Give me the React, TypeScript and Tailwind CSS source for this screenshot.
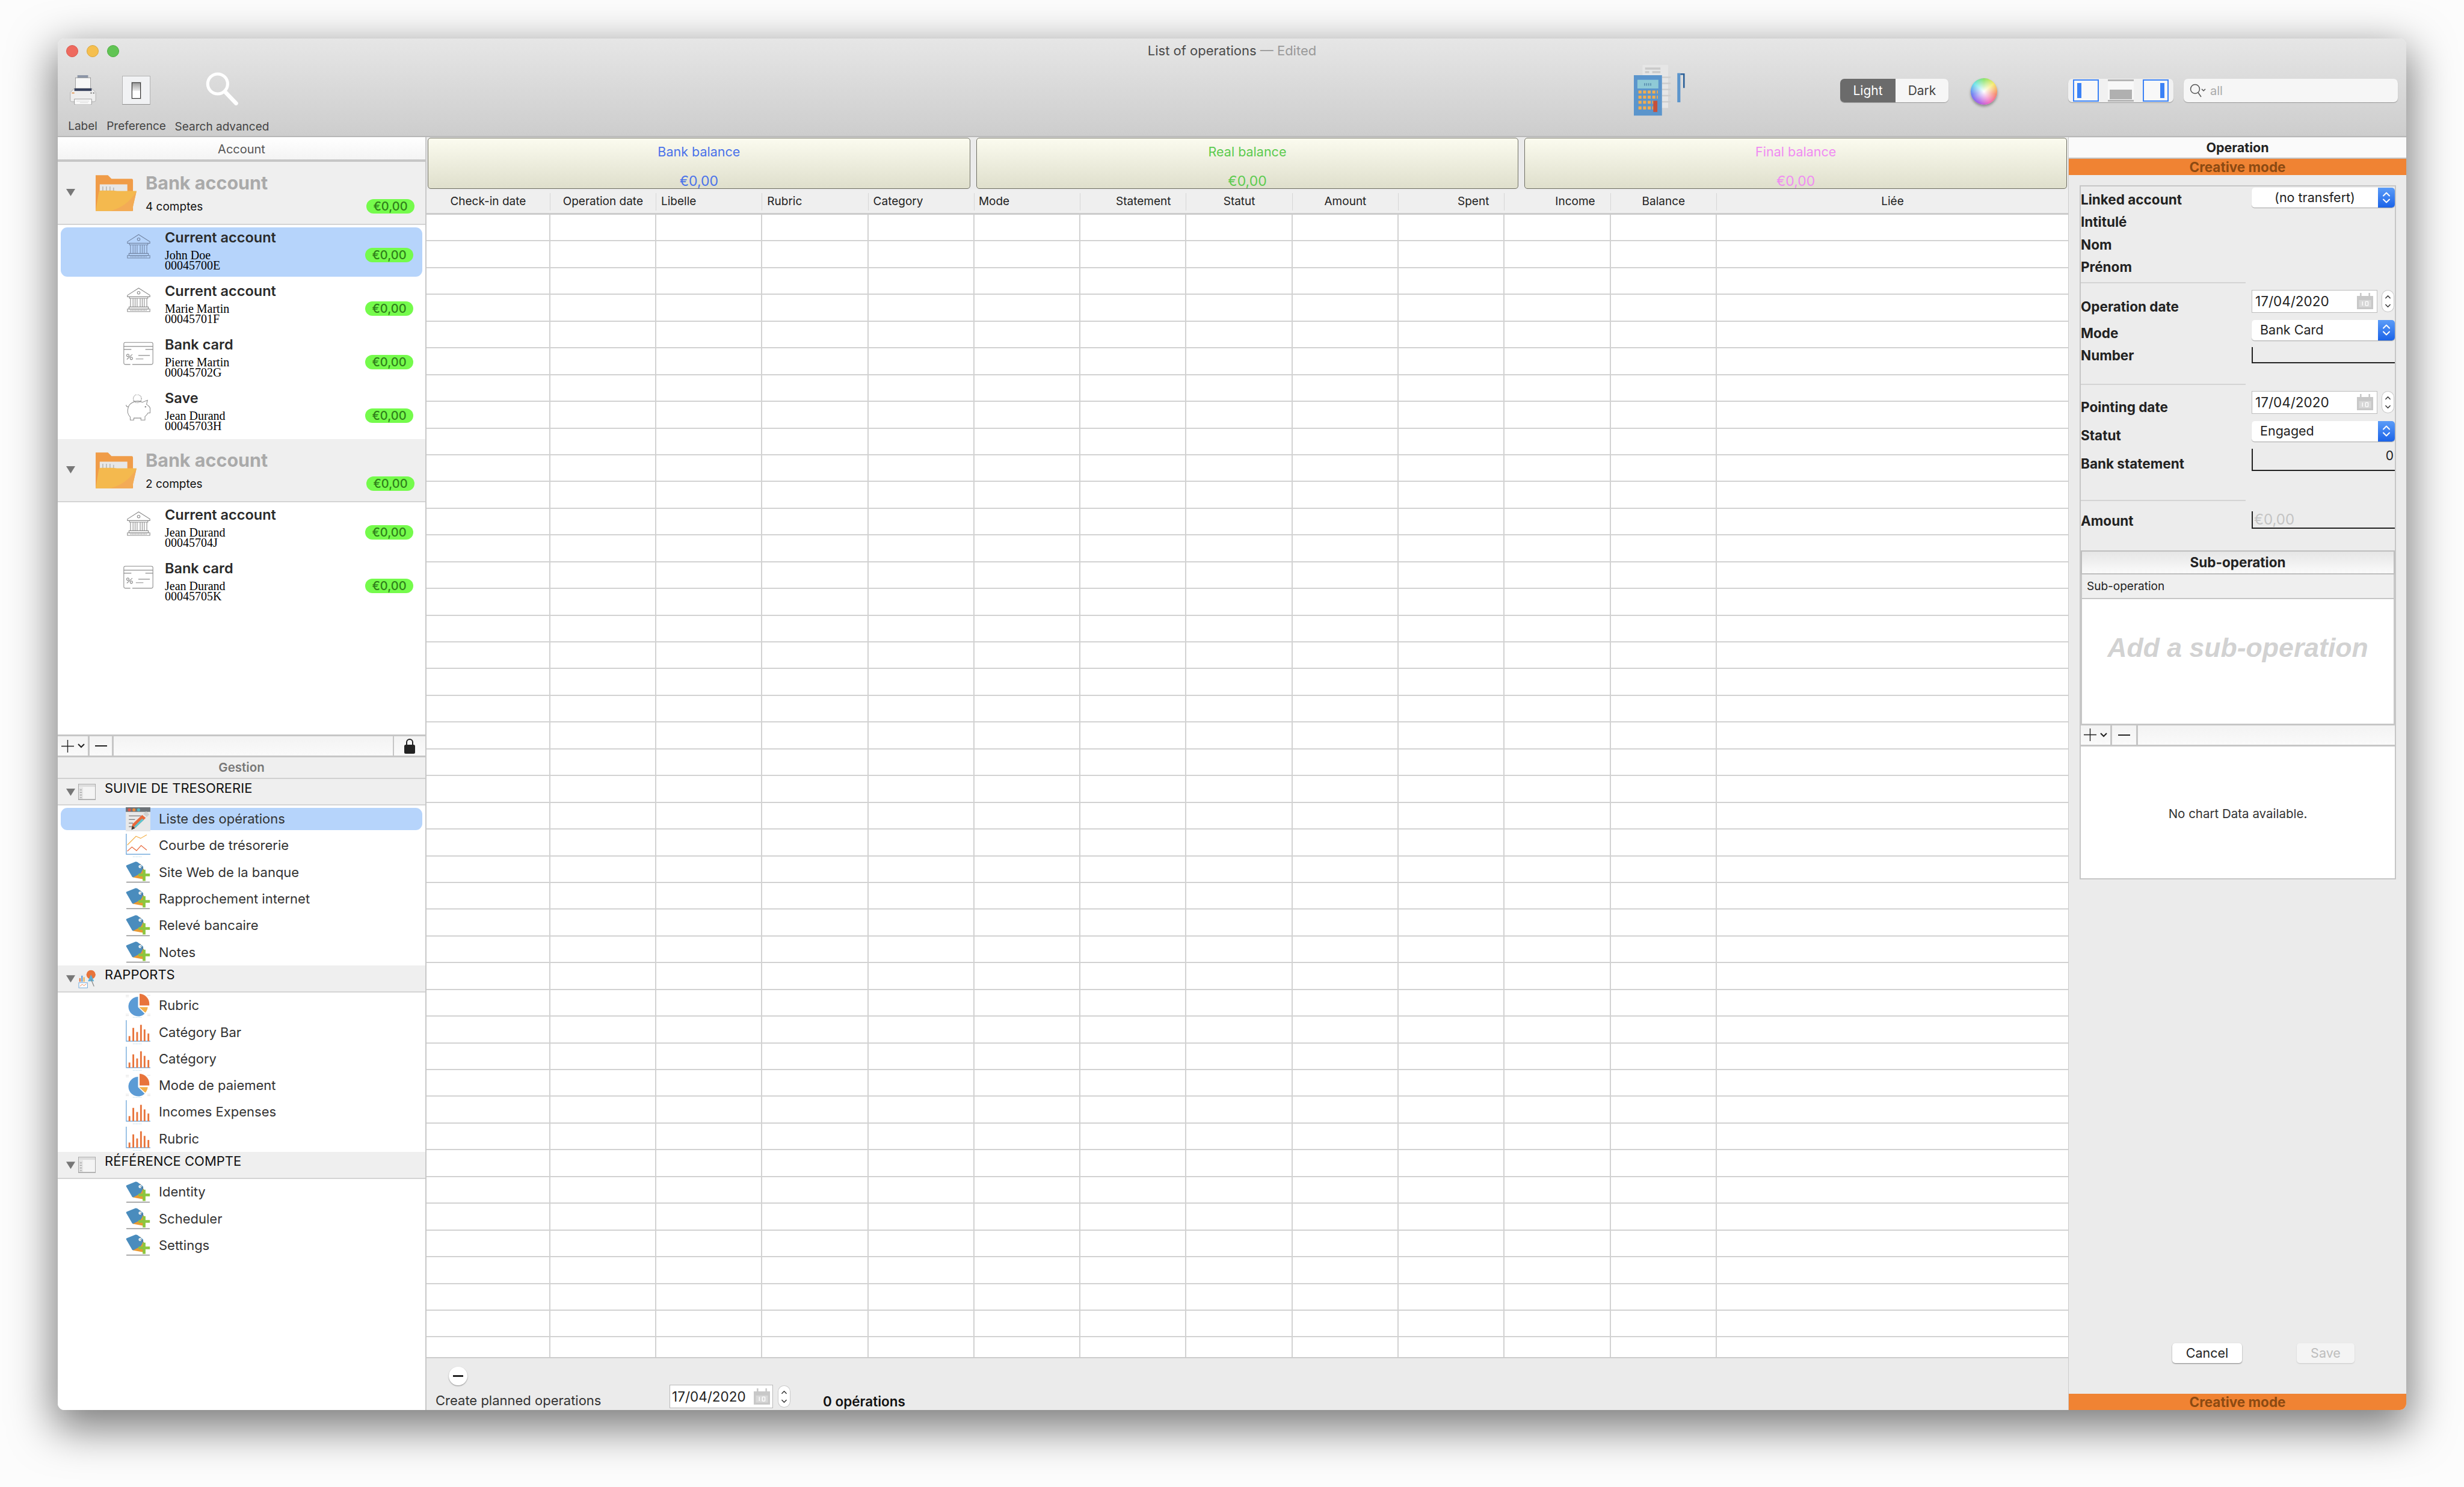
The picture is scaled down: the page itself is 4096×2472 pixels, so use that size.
import React from 'react';

const BankIcon = ({ stroke = '#8c8c8c' }: { stroke?: string }) => (
  <svg viewBox="0 0 46 48" className="w-[39px] h-[41px]" fill="none" stroke={stroke} strokeWidth="1.3">
    <path d="M1 15 L23 1 L45 15 L45 18 L1 18 Z" />
    <circle cx="23" cy="10" r="2.6" />
    <path d="M5 18 V21 H41 V18" />
    <path d="M7 21 V38 M12 21 V38 M16 21 V38 M20 21 V38 M26 21 V38 M30 21 V38 M34 21 V38 M39 21 V38" />
    <path d="M4 38 H42 V42 H4 Z" />
    <path d="M1 42 H45 V47 H1 Z" />
    <path d="M7 44.5 H39" strokeDasharray="1.5 1.5" />
  </svg>
);

const CardIcon = () => (
  <svg viewBox="0 0 60 48" className="w-[51px] h-[41px]" fill="none" stroke="#8c8c8c" strokeWidth="1.3">
    <path d="M14 46 H4 Q1 46 1 43 V5 Q1 2 4 2 H56 Q59 2 59 5 V43 Q59 46 56 46 H18" />
    <path d="M1 10 H59 M1 16 H16 M44 16 H59" />
    <path d="M7 36 L18 26" />
    <circle cx="9" cy="28" r="2.4" />
    <circle cx="16" cy="34" r="2.4" />
    <path d="M25 35 H40 M30 28 H53" />
  </svg>
);

const PiggyIcon = () => (
  <svg viewBox="0 0 52 52" className="w-[44px] h-[44px]" fill="none" stroke="#8c8c8c" strokeWidth="1.2">
    <circle cx="24" cy="8" r="8" strokeDasharray="2 1" />
    <path d="M16 13 H32" />
    <path d="M6 26 C8 16 22 10 34 15 L44 11 L42 19 Q47 22 49 26 V36 H45 Q42 41 39 43 V50 H31 V46 H17 V50 H10 V44 C4 38 4 32 6 26 Z" />
    <path d="M6 24 Q2 24 2 20" />
    <circle cx="40" cy="24" r="0.9" fill="#8c8c8c" />
    <path d="M18 46 H32" strokeDasharray="1.5 1.5" />
  </svg>
);

const FolderIcon = () => (
  <svg viewBox="0 0 80 70" className="w-[68px] h-[60px] flex-none">
    <path d="M0 0 H24 L31 7 H71 Q73 7 73 10 V70 H0 Z" fill="#f09c48" />
    <path d="M8 18 H62 V38 H8 Z" fill="#e7e7e7" />
    <path d="M14 22 V36 M21 22 V36 M28 22 V36 M35 24 V36" stroke="#b9b9b9" strokeWidth="2" />
    <path d="M8 30 Q8 30 10 30 H34 L42 31 L80 31 L71 70 H0 L6 34 Q7 30 10 30 Z" fill="#f4b94e" />
    <path d="M28 70 Q62 62 80 31 L71 70 Z" fill="#f3ab56" />
  </svg>
);

const Triangle = ({ className }: { className: string }) => (
  <div className={`w-[15px] h-[12px] flex-none bg-[#777777] [clip-path:polygon(0_0,100%_0,50%_100%)] ${className}`} />
);

const WindowIcon = () => (
  <svg viewBox="0 0 34 32" className="w-[29px] h-[27px] flex-none ml-[5px] mt-[8px]">
    <rect x="0.5" y="0.5" width="33" height="31" fill="#f4f4f4" stroke="#9d9d9d" />
    <rect x="1" y="1" width="32" height="5" fill="#dddddd" />
    <rect x="1" y="7" width="8" height="24" fill="#e2e2e2" />
    <path d="M3 12 H7 M3 17 H7 M3 22 H7 M3 27 H7" stroke="#a0a0a0" strokeWidth="1.4" />
    <rect x="0" y="30" width="34" height="2" fill="#a9a9a9" />
  </svg>
);

const ReportsIcon = () => (
  <svg viewBox="0 0 34 38" className="w-[29px] h-[32px] flex-none ml-[5px] mt-[6px]">
    <rect x="0" y="9" width="16" height="14" fill="#ececec" />
    <rect x="2" y="18" width="2.5" height="7" fill="#e8743b" />
    <rect x="6" y="13" width="2.5" height="12" fill="#5b9bd5" />
    <rect x="10" y="16" width="2.5" height="9" fill="#f2b04a" />
    <circle cx="25" cy="11" r="9" fill="#e8743b" />
    <path d="M25 11 L31 24 L19 24 Z" fill="#5ab0d8" />
    <path d="M25 20 L31 34" stroke="#888888" strokeWidth="1.5" />
    <rect x="1" y="27" width="17" height="10" fill="#ffffff" stroke="#5b9bd5" />
    <path d="M3 34 L8 30 L11 33 L16 29" fill="none" stroke="#e8743b" />
  </svg>
);

const TagPlusIcon = () => (
  <svg viewBox="0 0 48 42" className="w-[41px] h-[36px] flex-none">
    <path d="M14 31 L28 4 L36 18 L36 35 Z" fill="#e99a33" />
    <path d="M1 10 Q0 8 3 7 L19 0.5 Q21 0 23 1.5 L33 9 Q35 11 34 13 L31 20 Q30 22 28 24 L16 30 Q13 32 12 29 Z" fill="#4a8cbd" />
    <circle cx="28" cy="10" r="3" fill="#e8eef2" />
    <path d="M28 10 Q35 12 37 22" fill="none" stroke="#555555" strokeWidth="0.8" />
    <path d="M33 16 H38.5 V23.5 H47 V29 H38.5 V38 H33 V29 H25 V23.5 H33 Z" fill="#8cc63f" />
    <rect x="1" y="39.5" width="46" height="1.6" rx="0.8" fill="#8e8e8e" />
  </svg>
);

const ListEditIcon = () => (
  <svg viewBox="0 0 48 47" className="w-[41px] h-[40px] flex-none">
    <rect width="48" height="47" fill="#e8e8e8" />
    <rect width="48" height="9" fill="#6d7378" />
    <circle cx="7" cy="5" r="3" fill="#e0574a" />
    <circle cx="16" cy="5" r="3" fill="#ec8a3a" />
    <circle cx="25" cy="5" r="3" fill="#54b8c4" />
    <path d="M6 17 H30 M6 24 H18 M6 31 H14 M6 38 H14" stroke="#7a7a7a" strokeWidth="1.4" />
    <path d="M11 42 L13 33 L32 15 L39 21 L19 40 Z" fill="#e8693c" />
    <path d="M16 38 L32 22 L35 25 L19 40 Z" fill="#5cc4cf" />
    <path d="M11 44 L13 36 L18 41 Z" fill="#3a3a3a" />
    <path d="M34 13 L40 8 L46 14 L41 19 Z" fill="#cfcfcf" />
  </svg>
);

const LineChartIcon = () => (
  <svg viewBox="0 0 48 47" className="w-[41px] h-[40px] flex-none" fill="none">
    <path d="M1 0 V40 H48" stroke="#5b9bd5" strokeWidth="1.4" />
    <path d="M3 22 L20 5 L29 9 L41 2" stroke="#f2b04a" strokeWidth="1.4" />
    <path d="M3 34 L12 26 L21 33 L30 23 L41 32" stroke="#e8693c" strokeWidth="1.4" />
    <path d="M14 45 H32" stroke="#a9d3e6" strokeWidth="1.2" strokeDasharray="1.5 1.5" />
  </svg>
);

const PieIcon = () => (
  <svg viewBox="0 0 48 47" className="w-[41px] h-[40px] flex-none">
    <path d="M0 3 H6 M0 6 H6 M42 3 H48 M0 40 H6 M0 43 H6 M42 40 H48 M42 43 H48" stroke="#e2e2e2" strokeWidth="1.2" />
    <path d="M24 6 A19 19 0 1 0 37 39 L24 26 Z" fill="#5b9bd5" />
    <path d="M26 26 H43 A19 19 0 0 1 38 37 Z" fill="#f2b04a" />
    <path d="M27 0 A20 20 0 0 1 46 20 V23 H27 Z" fill="#e8743b" />
    <path d="M14 46 H32" stroke="#a9d3e6" strokeWidth="1.2" strokeDasharray="1.5 1.5" />
  </svg>
);

const BarIcon = () => (
  <svg viewBox="0 0 48 47" className="w-[41px] h-[40px] flex-none">
    <path d="M1 0 V41 H48" fill="none" stroke="#5b9bd5" strokeWidth="1.4" />
    <rect x="5.5" y="31" width="3.4" height="10" fill="#e8743b" />
    <rect x="13" y="15" width="3.4" height="26" fill="#e8743b" />
    <rect x="20.5" y="23" width="3.4" height="18" fill="#e8743b" />
    <rect x="28" y="9" width="3.4" height="32" fill="#e8743b" />
    <rect x="35" y="18" width="3.4" height="23" fill="#e8743b" />
    <rect x="42.5" y="26" width="3.4" height="15" fill="#e8743b" />
    <path d="M14 46 H32" stroke="#a9d3e6" strokeWidth="1.2" strokeDasharray="1.5 1.5" />
  </svg>
);

const PrinterIcon = () => (
  <svg viewBox="0 0 52 58" className="w-[44px] h-[49px]">
    <rect x="15" y="0" width="21" height="7" fill="#8d96a8" />
    <rect x="11" y="5" width="30" height="22" fill="#f7f7f7" stroke="#7d7d7d" strokeWidth="0.8" />
    <path d="M9 26 H43 L51 34 V49 Q51 52 48 52 H4 Q1 52 1 49 V34 Z" fill="#eeeeee" stroke="#9a9a9a" strokeWidth="0.8" />
    <rect x="9" y="26" width="34" height="5" fill="#37415c" />
    <rect x="4" y="34" width="5" height="2" fill="#e2924a" />
    <circle cx="42" cy="35" r="1.4" fill="#777777" />
    <circle cx="47" cy="35" r="1.4" fill="#777777" />
    <path d="M9 47 H43 V56 Q43 58 41 58 H11 Q9 58 9 56 Z" fill="#fafafa" stroke="#777777" strokeWidth="0.8" />
    <path d="M13 51 H38 M20 54 H36" stroke="#cccccc" strokeWidth="0.8" />
  </svg>
);

const SwitchIcon = () => (
  <div className="w-[47px] h-[48px] mt-[1px] bg-[#f1f2f4] border border-[#b4b4b4] border-b-[#8f8f8f] flex items-center justify-center">
    <div className="w-[15px] h-[27px] border border-[#333333] bg-[linear-gradient(#9c9c9c,#e9e9e9_50%,#ffffff_52%)] shadow-[0_0_0_1px_#cccccc]" />
  </div>
);

const BigSearchIcon = () => (
  <svg viewBox="0 0 64 66" className="w-[55px] h-[56px]" fill="none" stroke="#ffffff">
    <circle cx="23" cy="23" r="19.5" strokeWidth="6" />
    <path d="M37 38 L59 61" strokeWidth="8" strokeLinecap="round" />
  </svg>
);

const CalculatorIcon = () => (
  <svg viewBox="0 0 100 100" className="w-[85px] h-[85px] mx-0">
    <rect x="17" y="0" width="50" height="84" fill="#e6e6e6" />
    <path d="M22 7 H52 M22 14 H30 M36 14 H52" stroke="#c9c9c9" strokeWidth="4" />
    <path d="M55 24 H72 M55 36 H72 M55 48 H72 M55 60 H72 M55 72 H72" stroke="#cfcfcf" strokeWidth="3" />
    <rect x="0" y="20" width="55" height="79" fill="#5b95cc" />
    <rect x="7" y="29" width="41" height="17" fill="#8fcad6" />
    <path d="M20 38 H34" stroke="#5b8fb0" strokeWidth="5" strokeDasharray="2 2" />
    <path d="M9 53 H47 M9 63 H47 M9 73 H38 M9 84 H38" stroke="#f2ac4e" strokeWidth="6" strokeDasharray="6 3" />
    <rect x="38" y="70" width="8" height="22" fill="#c7503a" />
    <rect x="85" y="16" width="6" height="57" fill="#5b95cc" />
    <path d="M91 18 H98 V45" fill="none" stroke="#2a5f98" strokeWidth="3" />
  </svg>
);

const SelectArrows = () => (
  <div className="w-[28px] h-full flex-none bg-[linear-gradient(#5b9cf8,#1b63e8)] flex items-center justify-center">
    <svg viewBox="0 0 16 24" className="w-[16px] h-[25px]" fill="none" stroke="#ffffff" strokeWidth="2" strokeLinecap="round" strokeLinejoin="round">
      <path d="M3 9 L8 4 L13 9 M3 15 L8 20 L13 15" />
    </svg>
  </div>
);

const Select = ({ children, center }: { children: React.ReactNode; center?: boolean }) => (
  <div className="w-[238px] h-full flex bg-white rounded-[5px] overflow-hidden shadow-[0_1px_1px_rgba(0,0,0,0.3)]">
    <div className={`flex-1 flex items-center text-[21.5px] text-[#222222] ${center ? 'justify-center' : 'pl-[14px]'}`}>{children}</div>
    <SelectArrows />
  </div>
);

const CalendarGlyph = ({ className }: { className: string }) => (
  <svg viewBox="0 0 32 32" className={className}>
    <path d="M0 6 H6 V0 H9 V6 H23 V0 H26 V6 H32 V32 H0 Z" fill="#c8c8c8" />
    <rect x="4" y="14" width="24" height="14" fill="#d8d8d8" />
    <path d="M11 17 V25 M17 17 V25 M22 17 V25 M17 17 H22 M17 25 H22" stroke="#ffffff" strokeWidth="1.6" fill="none" />
  </svg>
);

const Stepper = ({ className }: { className: string }) => (
  <div className={`flex-none bg-white rounded-full shadow-[0_0_0_1px_#c9c9c9] flex items-center justify-center ${className}`}>
    <svg viewBox="0 0 12 28" className="w-[11px] h-[26px]" fill="none" stroke="#333333" strokeWidth="1.6" strokeLinecap="round" strokeLinejoin="round">
      <path d="M2 8 L6 4 L10 8 M2 20 L6 24 L10 20" />
    </svg>
  </div>
);

const DateField = () => (
  <div className="flex items-center h-full">
    <div className="w-[209px] h-full bg-white border border-[#bdbdbd] flex items-center pl-[5px] text-[22.5px] text-[#222222]">
      17/04/2020
      <CalendarGlyph className="w-[27px] h-[27px] ml-auto mr-[6px]" />
    </div>
    <Stepper className="w-[19px] h-[35px] ml-[8px]" />
  </div>
);

const Pill = ({ className }: { className: string }) => (
  <div className={`w-[80px] h-[24px] flex-none rounded-full bg-[#75fb4c] text-[#2f7f1a] text-[20px] font-medium flex items-center justify-center ${className}`}>
    €0,00
  </div>
);

const AccountGroup = ({ count }: { count: string }) => (
  <div className="h-[105px] flex items-start bg-[#efefef] border-b-2 border-[#d4d4d4]">
    <Triangle className="ml-[14px] mt-[45px]" />
    <div className="ml-[34px] mt-[22px]">
      <FolderIcon />
    </div>
    <div className="ml-[15px] mt-[20px]">
      <div className="text-[30.5px] leading-[30px] font-bold text-[#aaaaaa]">Bank account</div>
      <div className="mt-[14px] text-[19px] leading-[22px] text-[#111111]">{count}</div>
    </div>
    <Pill className="ml-auto mr-[18px] mt-[62px]" />
  </div>
);

const AccountRow = ({ icon, title, name, id, selected }: { icon: React.ReactNode; title: string; name: string; id: string; selected?: boolean }) => (
  <div className="h-[89px] px-[5px] pt-[4px]">
    <div className={`h-[82px] flex items-start rounded-[11px] pr-[15px] ${selected ? 'bg-[#b6d4fb]' : ''}`}>
      <div className="w-[50px] ml-[104px] mt-[11px] flex justify-center flex-none">{icon}</div>
      <div className="ml-[19px] pt-[6px]">
        <div className="text-[23.5px] leading-[22px] font-semibold text-[#2a2a2a]">{title}</div>
        <div className="mt-[10px] text-[20px] leading-[17px] text-black [font-family:'Liberation_Serif',serif]">{name}</div>
        <div className="text-[20px] leading-[17px] text-black [font-family:'Liberation_Serif',serif]">{id}</div>
      </div>
      <Pill className="ml-auto mt-[34px]" />
    </div>
  </div>
);

const NavGroup = ({ icon, label }: { icon: React.ReactNode; label: string }) => (
  <div className="h-[44.4px] flex items-start bg-[#efefef] border-b-2 border-[#d4d4d4]">
    <Triangle className="ml-[14px] mt-[16px]" />
    {icon}
    <div className="ml-[15px] text-[22px] leading-[24px] mt-[3px] text-[#111111]">{label}</div>
  </div>
);

const NavItem = ({ icon, label, selected }: { icon: React.ReactNode; label: string; selected?: boolean }) => (
  <div className="h-[44.3px] px-[5px] py-[4px]">
    <div className={`h-full flex items-center pl-[108px] rounded-[11px] ${selected ? 'bg-[#b6d4fb]' : ''}`}>
      {icon}
      <div className="ml-[14px] text-[22px] text-[#333333]">{label}</div>
    </div>
  </div>
);

const PlusMinusBar = ({ lock, plusClass, minusClass }: { lock?: boolean; plusClass: string; minusClass: string }) => (
  <div className="h-[38px] flex bg-[linear-gradient(#f3f3f3,#fafafa)] border-y-[3px] border-[#c6c6c6]">
    <div className={`flex items-center justify-center gap-[6px] border-r-[3px] border-[#c6c6c6] ${plusClass}`}>
      <svg viewBox="0 0 24 24" className="w-[21px] h-[21px]" fill="none" stroke="#222222" strokeWidth="1.6">
        <path d="M12 0 V24 M0 12 H24" />
      </svg>
      <svg viewBox="0 0 12 8" className="w-[12px] h-[8px]" fill="none" stroke="#222222" strokeWidth="2">
        <path d="M1 1 L6 6 L11 1" />
      </svg>
    </div>
    <div className={`flex items-center justify-center border-r-[3px] border-[#c6c6c6] ${minusClass}`}>
      <div className="w-[20px] h-[2px] bg-[#222222]" />
    </div>
    {lock && (
      <div className="ml-auto w-[54px] flex items-center justify-center border-l-[2px] border-[#c6c6c6]">
        <svg viewBox="0 0 18 26" className="w-[18px] h-[26px]">
          <path d="M4 12 V7 A5 5 0 0 1 14 7 V12" fill="none" stroke="#222222" strokeWidth="2" />
          <rect x="0" y="11" width="18" height="15" rx="2.5" fill="#222222" />
        </svg>
      </div>
    )}
  </div>
);

const BalanceBox = ({ label, color }: { label: string; color: string }) => (
  <div className={`flex-1 h-[85px] flex flex-col items-center pt-[12px] rounded-[5px] border-[1.5px] border-[#6e6e62] bg-[linear-gradient(#fbfbef,#dfdfcc)] ${color}`}>
    <div className="text-[21.5px] leading-[20px]">{label}</div>
    <div className="mt-[27px] text-[23px] leading-[24px]">€0,00</div>
  </div>
);

const columns: { label: string; cls: string }[] = [
  { label: 'Check-in date', cls: 'justify-center' },
  { label: 'Operation date', cls: 'justify-center' },
  { label: 'Libelle', cls: 'pl-[8px]' },
  { label: 'Rubric', cls: 'pl-[8px]' },
  { label: 'Category', cls: 'pl-[8px]' },
  { label: 'Mode', cls: 'pl-[7px]' },
  { label: 'Statement', cls: 'justify-end pr-[25px]' },
  { label: 'Statut', cls: 'justify-center' },
  { label: 'Amount', cls: 'justify-center' },
  { label: 'Spent', cls: 'justify-end pr-[25px]' },
  { label: 'Income', cls: 'justify-end pr-[25px]' },
  { label: 'Balance', cls: 'justify-center' },
  { label: 'Liée', cls: 'justify-center' },
];

const rows = Array.from({ length: 44 });

const FormRow = ({ label, rowClass, labelClass, children }: { label: string; rowClass: string; labelClass: string; children?: React.ReactNode }) => (
  <div className={`flex items-start ${rowClass}`}>
    <div className={`w-[284px] flex-none text-[22.5px] leading-[24px] font-bold text-[#222222] ${labelClass}`}>{label}</div>
    {children}
  </div>
);

const Hr = ({ className }: { className: string }) => <div className={`w-[274px] h-[2px] bg-[#d4d4d4] ${className}`} />;

const SidePanelButton = ({ variant }: { variant: 'left' | 'mid' | 'right' }) => (
  <div className={`w-[43px] h-[37px] bg-[#f8f8f8] flex ${variant === 'mid' ? 'border-y-[3px] border-[#b5b5b5] items-end pb-[1px] px-[3px]' : 'border-[2px] border-[#3b82f6] px-[5px] py-[4px]'} ${variant === 'right' ? 'justify-end' : ''}`}>
    {variant === 'mid' ? <div className="w-full h-[16px] bg-[#b0b0b0]" /> : <div className="w-[7px] h-full bg-[#3b82f6]" />}
  </div>
);

export default function App() {
  return (
    <div className="w-[4096px] h-[2472px] bg-[#fcfcfc] pl-[96px] pt-[64px] [font-family:Inter,sans-serif] overflow-hidden">
      <div className="w-[3904px] h-[2280px] flex flex-col rounded-[11px] overflow-hidden shadow-[0_24px_70px_8px_rgba(0,0,0,0.5)]">
        {/* toolbar */}
        <div className="h-[164px] flex-none bg-[linear-gradient(#e6e6e6,#cdcdcd)] border-b-[2px] border-[#b8b8b8]">
          <div className="h-[41px] grid grid-cols-[1fr_auto_1fr] items-center">
            <div className="flex gap-[14px] pl-[14px]">
              <div className="w-[20px] h-[20px] rounded-full bg-[#ee6a5f] border border-[#d8584e]" />
              <div className="w-[20px] h-[20px] rounded-full bg-[#f5bf4f] border border-[#d9a63c]" />
              <div className="w-[20px] h-[20px] rounded-full bg-[#61c454] border border-[#4ead42]" />
            </div>
            <div className="text-[22px] text-[#4a4a4a]">
              List of operations <span className="text-[#9a9a9a]">— Edited</span>
            </div>
            <div />
          </div>
          <div className="flex pl-[18px] pr-[13px]">
            <div className="w-[332px] flex-none flex gap-[17px] text-[19px] text-[#444444]">
              <div className="flex flex-col items-center w-[47px] pt-[20px]">
                <PrinterIcon />
                <div className="mt-[25px] leading-[22px]">Label</div>
              </div>
              <div className="flex flex-col items-center w-[97px] pt-[20px]">
                <SwitchIcon />
                <div className="mt-[25px] leading-[22px]">Preference</div>
              </div>
              <div className="flex flex-col items-center w-[154px] pt-[15px]">
                <BigSearchIcon />
                <div className="mt-[24px] leading-[22px] whitespace-nowrap">Search advanced</div>
              </div>
            </div>
            <div className="ml-[2270px] mt-[3px] flex-none">
              <CalculatorIcon />
            </div>
            <div className="ml-[258px] mt-[26px] w-[180px] h-[39px] flex rounded-[7px] overflow-hidden text-[21px] shadow-[0_1px_1px_rgba(0,0,0,0.3)]">
              <div className="w-[92px] bg-[#6b6b6b] text-white flex items-center justify-center">Light</div>
              <div className="flex-1 bg-[#f6f6f6] text-[#444444] flex items-center justify-center">Dark</div>
            </div>
            <div className="ml-[37px] mt-[25px] w-[44px] h-[44px] rounded-full shadow-[0_3px_4px_rgba(0,0,0,0.35)] [background:radial-gradient(circle,#ffffff,rgba(255,255,255,0)_75%),conic-gradient(#7ee05a,#f5e85a,#f57a5a,#f05ab8,#9a4ae8,#5a6ff0,#5ae0e8,#7ee05a)]" />
            <div className="ml-[118px] mt-[26px] w-[175px] h-[39px] flex items-center justify-between px-[8px] rounded-[7px] bg-[#f1f1f1] shadow-[0_1px_1px_rgba(0,0,0,0.3)]">
              <SidePanelButton variant="left" />
              <SidePanelButton variant="mid" />
              <SidePanelButton variant="right" />
            </div>
            <div className="ml-[17px] mt-[26px] w-[356px] h-[39px] flex items-center pl-[10px] rounded-[7px] bg-[#f6f6f6] shadow-[0_1px_1px_rgba(0,0,0,0.3)]">
              <svg viewBox="0 0 28 24" className="w-[28px] h-[24px]" fill="none" stroke="#555555" strokeWidth="1.5">
                <circle cx="9" cy="9" r="7.5" />
                <path d="M14 15 L19 22" />
                <path d="M20 9 L23 12 L26 9" />
              </svg>
              <div className="ml-[6px] text-[20px] text-[#aaaaaa]">all</div>
            </div>
          </div>
        </div>

        <div className="flex-1 flex min-h-0">
          {/* accounts sidebar */}
          <div className="w-[613px] flex-none flex flex-col bg-white border-r-[2px] border-[#c8c8c8]">
            <div className="h-[993px] flex-none overflow-hidden">
              <div className="h-[41px] flex items-center justify-center pt-[2px] bg-[linear-gradient(#ffffff,#f4f4f4)] border-b-[4px] border-[#c6c6c6] text-[20px] text-[#555555]">Account</div>
              <AccountGroup count="4 comptes" />
              <AccountRow selected icon={<BankIcon stroke="#7385a3" />} title="Current account" name="John Doe" id="00045700E" />
              <AccountRow icon={<BankIcon />} title="Current account" name="Marie Martin" id="00045701F" />
              <AccountRow icon={<CardIcon />} title="Bank card" name="Pierre Martin" id="00045702G" />
              <AccountRow icon={<PiggyIcon />} title="Save" name="Jean Durand" id="00045703H" />
              <AccountGroup count="2 comptes" />
              <AccountRow icon={<BankIcon />} title="Current account" name="Jean Durand" id="00045704J" />
              <AccountRow icon={<CardIcon />} title="Bank card" name="Jean Durand" id="00045705K" />
            </div>
            <PlusMinusBar lock plusClass="w-[53px]" minusClass="w-[40px]" />
            <div className="h-[36px] flex-none flex items-center justify-center pt-[1px] bg-[#efefef] border-b-2 border-[#d0d0d0] text-[20.5px] font-semibold text-[#777777]">Gestion</div>
            <NavGroup icon={<WindowIcon />} label="SUIVIE DE TRESORERIE" />
            <NavItem selected icon={<ListEditIcon />} label="Liste des opérations" />
            <NavItem icon={<LineChartIcon />} label="Courbe de trésorerie" />
            <NavItem icon={<TagPlusIcon />} label="Site Web de la banque" />
            <NavItem icon={<TagPlusIcon />} label="Rapprochement internet" />
            <NavItem icon={<TagPlusIcon />} label="Relevé bancaire" />
            <NavItem icon={<TagPlusIcon />} label="Notes" />
            <NavGroup icon={<ReportsIcon />} label="RAPPORTS" />
            <NavItem icon={<PieIcon />} label="Rubric" />
            <NavItem icon={<BarIcon />} label="Catégory Bar" />
            <NavItem icon={<BarIcon />} label="Catégory" />
            <NavItem icon={<PieIcon />} label="Mode de paiement" />
            <NavItem icon={<BarIcon />} label="Incomes Expenses" />
            <NavItem icon={<BarIcon />} label="Rubric" />
            <NavGroup icon={<WindowIcon />} label="RÉFÉRENCE COMPTE" />
            <NavItem icon={<TagPlusIcon />} label="Identity" />
            <NavItem icon={<TagPlusIcon />} label="Scheduler" />
            <NavItem icon={<TagPlusIcon />} label="Settings" />
          </div>

          {/* operations table */}
          <div className="w-[2729px] flex-none flex flex-col min-w-0 bg-[#ebebeb]">
            <div className="h-[87px] flex-none flex gap-[10px] px-[2px] pt-[1px]">
              <BalanceBox label="Bank balance" color="text-[#4a72ea]" />
              <BalanceBox label="Real balance" color="text-[#5ccb4f]" />
              <BalanceBox label="Final balance" color="text-[#f08cf2]" />
            </div>
            <div className="h-[42px] flex-none grid grid-cols-[205.7px_repeat(11,176.3px)_1fr] bg-[#efefef] border-b-[3px] border-[#cccccc] pt-[6px] pb-[4px]">
              {columns.map((c, i) => (
                <div key={i} className={`flex items-center text-[19px] text-[#222222] border-r border-[#d6d6d6] last:border-r-0 ${c.cls}`}>
                  {c.label}
                </div>
              ))}
            </div>
            <div className="flex-1 min-h-0 overflow-hidden bg-white">
              {rows.map((_, r) => (
                <div key={r} className="h-[44.45px] grid grid-cols-[205.7px_repeat(11,176.3px)_1fr] border-b-[2px] border-[#d2d2d2]">
                  {columns.map((c, i) => (
                    <div key={i} className="border-r-[2px] border-[#d2d2d2] last:border-r-0" />
                  ))}
                </div>
              ))}
            </div>
            <div className="h-[88px] flex-none flex items-start bg-[#ebebeb] border-t-[2px] border-[#cccccc]">
              <div className="w-[404px] flex-none pl-[15px]">
                <div className="ml-[22px] mt-[14px] w-[31px] h-[31px] rounded-full bg-white shadow-[0_1px_2px_rgba(0,0,0,0.4)] flex items-center justify-center">
                  <div className="w-[17px] h-[3px] bg-[#222222]" />
                </div>
                <div className="mt-[13px] text-[22px] leading-[24px] text-[#333333] whitespace-nowrap">Create planned operations</div>
              </div>
              <div className="mt-[44px] w-[172px] h-[39px] flex-none bg-white border border-[#b9b9b9] flex items-center pl-[3px] text-[22.5px] text-[#222222]">
                17/04/2020
                <CalendarGlyph className="w-[27px] h-[27px] ml-auto mr-[4px]" />
              </div>
              <Stepper className="w-[19px] h-[35px] ml-[9px] mt-[46px]" />
              <div className="ml-[55px] mt-[60px] text-[22.5px] leading-[24px] font-semibold text-[#111111]">0 opérations</div>
            </div>
          </div>

          {/* operation panel */}
          <div className="flex-1 min-w-0 flex flex-col bg-[#ebebeb] border-l-[1px] border-[#cccccc]">
            <div className="h-[35px] flex-none mt-[1px] flex items-center justify-center bg-[#fafafa] border-b-[2px] border-[#c2c2c2] text-[21.5px] font-bold text-[#222222]">Operation</div>
            <div className="h-[27px] flex-none flex items-center justify-center bg-[#f08333] text-[22.5px] font-bold text-[#8c4a12]">Creative mode</div>
            <div className="mt-[17px] ml-[18px] w-[526px] h-[1154px] flex-none flex flex-col bg-[#ececec] border-2 border-[#c6c6c6]">
              <FormRow label="Linked account" rowClass="mt-[2px] h-[33px]" labelClass="mt-[8px]">
                <Select center>(no transfert)</Select>
              </FormRow>
              <FormRow label="Intitulé" rowClass="mt-[6px] h-[37.5px]" labelClass="mt-[6px]" />
              <FormRow label="Nom" rowClass="h-[37.5px]" labelClass="mt-[6px]" />
              <FormRow label="Prénom" rowClass="h-[37.5px]" labelClass="mt-[6px]" />
              <Hr className="mt-[5px]" />
              <FormRow label="Operation date" rowClass="mt-[11px] h-[38px]" labelClass="mt-[16px]">
                <DateField />
              </FormRow>
              <FormRow label="Mode" rowClass="mt-[12px] h-[34px]" labelClass="mt-[10px]">
                <Select>Bank Card</Select>
              </FormRow>
              <FormRow label="Number" rowClass="mt-[11px] h-[27px]" labelClass="mt-[2px]">
                <div className="w-[238px] h-full border-l-2 border-b-2 border-[#222222]" />
              </FormRow>
              <Hr className="mt-[34px]" />
              <FormRow label="Pointing date" rowClass="mt-[10px] h-[38px]" labelClass="mt-[15px]">
                <DateField />
              </FormRow>
              <FormRow label="Statut" rowClass="mt-[12px] h-[34px]" labelClass="mt-[12px]">
                <Select>Engaged</Select>
              </FormRow>
              <FormRow label="Bank statement" rowClass="mt-[12px] h-[37px]" labelClass="mt-[13px]">
                <div className="w-[238px] h-full border-l-2 border-b-2 border-[#222222] text-right pr-[2px] text-[21px] leading-[24px] text-[#222222]">0</div>
              </FormRow>
              <Hr className="mt-[48px]" />
              <FormRow label="Amount" rowClass="mt-[17px] h-[29px]" labelClass="mt-[4px]">
                <div className="w-[238px] h-full border-l-2 border-b-2 border-[#222222] pl-[2px] text-[24px] leading-[28px] text-[#c4c4c4]">€0,00</div>
              </FormRow>
              <div className="mt-[36px] flex-1 min-h-0 flex flex-col">
                <div className="h-[40px] flex-none flex items-center justify-center border-[2.5px] border-[#bdbdbd] bg-[linear-gradient(#e6e6e6,#fafafa)] text-[22.5px] font-bold text-[#222222]">Sub-operation</div>
                <div className="h-[41px] flex-none flex items-center pl-[8px] pt-[2px] bg-[#efefef] border-x-2 border-b-2 border-[#c6c6c6] text-[19px] text-[#222222]">Sub-operation</div>
                <div className="h-[207px] flex-none flex justify-center pt-[55px] bg-white border-x-2 border-[#c6c6c6] [font-family:'Liberation_Sans',sans-serif] italic font-bold text-[44.6px] leading-[52px] text-[#d2d2d2]">Add a sub-operation</div>
                <PlusMinusBar plusClass="w-[52px]" minusClass="w-[43px]" />
                <div className="flex-1 flex justify-center bg-white pt-[100px] text-[20.5px] leading-[24px] text-[#333333]">No chart Data available.</div>
              </div>
            </div>
            <div className="mt-[771px] flex-none flex pl-[172px] gap-[91px] text-[21.5px]">
              <div className="w-[116px] h-[33px] flex items-center justify-center bg-white rounded-[5px] shadow-[0_1px_2px_rgba(0,0,0,0.45)] text-[#222222]">Cancel</div>
              <div className="w-[96px] h-[33px] flex items-center justify-center bg-[#f4f4f4] rounded-[5px] shadow-[0_1px_2px_rgba(0,0,0,0.15)] text-[#bdbdbd]">Save</div>
            </div>
            <div className="mt-auto h-[27px] flex-none flex items-center justify-center bg-[#f08333] text-[22.5px] font-bold text-[#8c4a12]">Creative mode</div>
          </div>
        </div>
      </div>
    </div>
  );
}
